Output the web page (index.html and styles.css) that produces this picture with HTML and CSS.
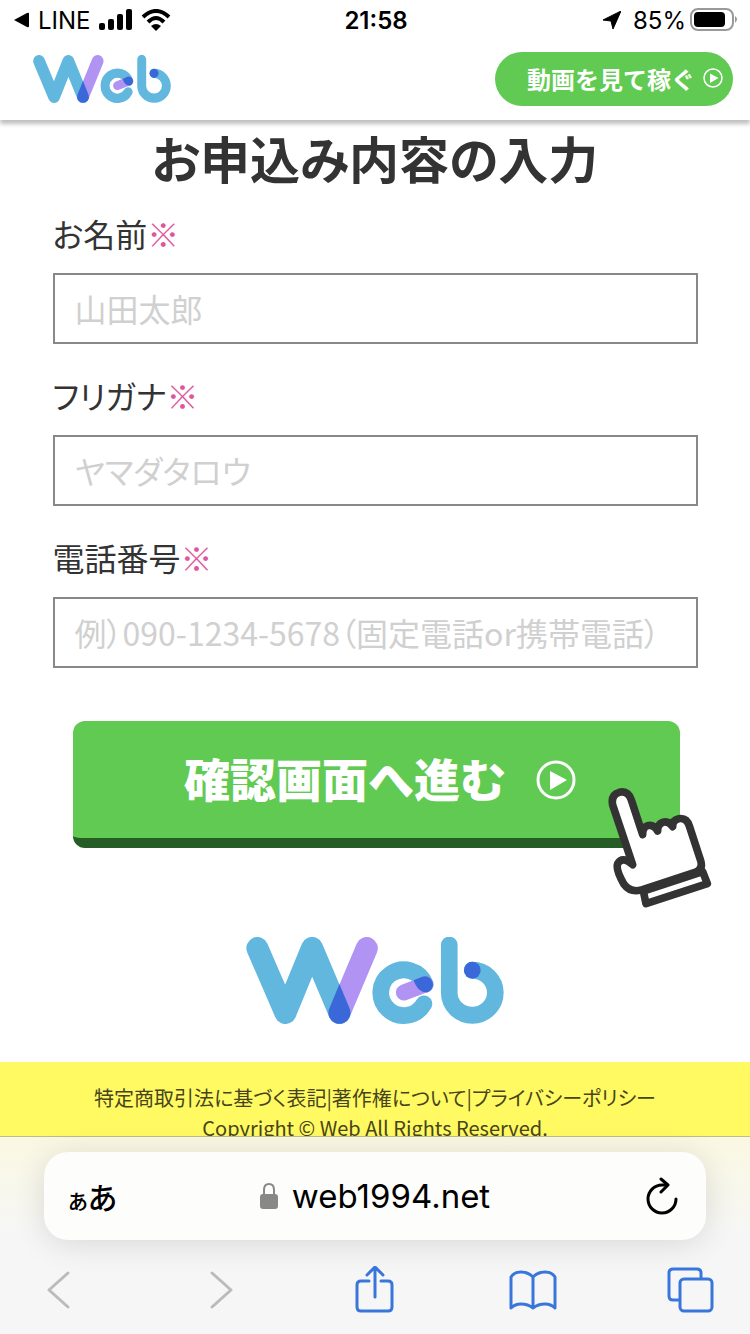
FILE: index.html
```html
<!DOCTYPE html>
<html lang="ja">
<head>
    <meta charset="UTF-8">
    <meta name="viewport" content="width=device-width, initial-scale=1.0">
    <title>お申込み内容の入力</title>
    <link rel="stylesheet" href="styles.css">
</head>
<body>
    <!-- ロゴ共通パーツ -->
    <svg class="sprite" aria-hidden="true">
        <symbol id="logo" viewBox="50 54 773 259" preserveAspectRatio="none">
            <g fill="none" stroke-linecap="round" stroke-linejoin="round">
                <path d="M412 87L330 280" stroke="#b193f3" stroke-width="66"/>
                <path d="M84 87L168 280L248 87L330 280" stroke="#61b7de" stroke-width="66"/>
                <path d="M587 195A69 68 0 1 0 583 253" stroke="#61b7de" stroke-width="50"/>
                <path d="M523 219L587 195" stroke="#b193f3" stroke-width="48"/>
                <path d="M659 78V221A69 67 0 1 0 728 153" stroke="#61b7de" stroke-width="50"/>
            </g>
            <path d="M330 194L361 268A33 33 0 1 1 299 268Z" fill="#3b68d9"/>
            <path d="M552 183L578 172A24 24 0 1 1 594 218C572 221 560 204 552 183Z" fill="#3b68d9"/>
            <circle cx="728" cy="153" r="25" fill="#3b68d9"/>
        </symbol>
        <symbol id="play" viewBox="0 0 40 40">
            <circle cx="20" cy="20" r="18" fill="none" stroke="#fff" stroke-width="3"/>
            <path d="M14 11L31 20L14 30Z" fill="#fff"/>
        </symbol>
    </svg>

    <div class="status-bar">
        <div class="status-left">
            <svg width="16" height="16" viewBox="0 0 16 16"><path d="M0 8L13 1Q15 0 15 2V14Q15 16 13 15Z"/></svg>
            <span>LINE</span>
            <svg width="34" height="22" viewBox="0 0 34 22"><rect x="0" y="14" width="6" height="7" rx="2"/><rect x="9" y="10" width="6" height="11" rx="2"/><rect x="18" y="5" width="6" height="16" rx="2"/><rect x="27" y="0" width="6" height="21" rx="2"/></svg>
            <svg width="30" height="22" viewBox="0 0 30 22"><g fill="none" stroke="#000" stroke-width="4"><path d="M2 8Q15 -4 28 8"/><path d="M7 13Q15 5 23 13"/></g><path d="M10 17Q15 13 20 17L15 22Z"/></svg>
        </div>
        <div class="status-time">21:58</div>
        <div class="status-right">
            <svg width="18" height="18" viewBox="0 0 18 18"><path d="M18 0L10 18L8 10L0 9Z" stroke="#000" stroke-linejoin="round"/></svg>
            <span>85%</span>
            <svg width="48" height="24" viewBox="0 0 48 24"><rect x="1" y="1" width="42" height="21" rx="7" fill="none" stroke="#999" stroke-width="2"/><rect x="4" y="4" width="31" height="15" rx="4"/><path d="M45 8Q49 11 45 15Z" fill="#999"/></svg>
        </div>
    </div>

    <header class="header">
        <a href="#" aria-label="Web"><svg class="header-logo"><use href="#logo"/></svg></a>
        <a href="#" class="header-button">動画を見て稼ぐ<svg width="20" height="20"><use href="#play"/></svg></a>
    </header>

    <main class="page">
        <h1>お申込み内容の入力</h1>
        <form class="form">
            <label for="name">お名前<span class="required">※</span></label>
            <input type="text" id="name" placeholder="山田太郎">
            <label for="kana">フリガナ<span class="required">※</span></label>
            <input type="text" id="kana" placeholder="ヤマダタロウ">
            <label for="tel">電話番号<span class="required">※</span></label>
            <input type="tel" id="tel" placeholder="例）090-1234-5678（固定電話or携帯電話）">
            <div class="submit-area">
                <button type="submit" class="submit-button"><span>確認画面へ進む</span><svg width="40" height="40"><use href="#play"/></svg></button>
                <!-- 指アイコン -->
                <svg class="hand" width="104" height="120" viewBox="85 55 310 360">
                    <g fill="#fff" stroke="#333" stroke-width="23" stroke-linejoin="round" stroke-linecap="round">
                        <path d="M158 285L98 106Q92 75 118 68Q144 62 154 91L188 195Q187 173 203 168Q221 163 233 184Q232 164 248 158Q266 153 278 171Q277 151 296 147Q320 143 328 169L362 273Q370 299 347 307L181 362Q149 368 132 344Q106 299 113 282Q127 258 158 285Z"/>
                        <path d="M190 364L368 306L382 342L198 402Z"/>
                    </g>
                </svg>
            </div>
        </form>
        <div class="page-logo"><svg><use href="#logo"/></svg></div>
        <footer class="footer">
            <nav><a href="#">特定商取引法に基づく表記</a>|<a href="#">著作権について</a>|<a href="#">プライバシーポリシー</a></nav>
            <p>Copyright © Web All Rights Reserved.</p>
        </footer>
    </main>

    <div class="browser-bar">
        <div class="url-bar">
            <button type="button" class="text-size" aria-label="表示設定"><small>ぁ</small>あ</button>
            <div class="url">
                <svg width="18" height="26" viewBox="0 0 18 26"><rect x="0" y="11" width="18" height="15" rx="3" fill="#888"/><path d="M4 12V7Q4 1 9 1Q14 1 14 7V12" fill="none" stroke="#888" stroke-width="2"/></svg>
                <span>web1994.net</span>
            </div>
            <button type="button" class="reload" aria-label="再読み込み"><svg width="32" height="38" viewBox="0 0 32 38"><g fill="none" stroke="#000" stroke-width="3" stroke-linecap="round" stroke-linejoin="round"><path d="M21 8H16A14 14 0 1 0 30 22"/><path d="M15 2L22 8L15 15"/></g></svg></button>
        </div>
        <div class="toolbar">
            <button type="button" class="disabled" aria-label="戻る"><svg viewBox="0 0 48 48"><path d="M32 7L13 24L32 41"/></svg></button>
            <button type="button" class="disabled" aria-label="進む"><svg viewBox="0 0 48 48"><path d="M18 7L37 24L18 41"/></svg></button>
            <button type="button" aria-label="共有"><svg viewBox="0 0 48 48"><path d="M18 15H10Q6 15 6 19V41Q6 45 10 45H37Q41 45 41 41V19Q41 15 37 15H30M24 31V1M16 9L24 1L32 9"/></svg></button>
            <button type="button" aria-label="ブックマーク"><svg viewBox="0 0 48 48"><path d="M24 11Q19 6 12 6Q5 6 2 11V42Q6 38 12 38Q19 38 24 42Q29 38 36 38Q42 38 46 42V11Q43 6 36 6Q29 6 24 11V42"/></svg></button>
            <button type="button" aria-label="タブ"><svg viewBox="0 0 48 48"><rect x="14" y="13" width="32" height="32" rx="4"/><path d="M13 34H7Q3 34 3 30V7Q3 3 7 3H31Q35 3 35 7V12"/></svg></button>
        </div>
    </div>
</body>
</html>
```
FILE: styles.css
```css
* {
    box-sizing: border-box;
}

body {
    display: flex;
    flex-direction: column;
    height: 100vh;
    margin: 0;
    background: #fff;
    color: #333;
    font-family: "Noto Sans CJK JP", sans-serif;
}

a {
    color: inherit;
    text-decoration: none;
}

button {
    padding: 0;
    border: none;
    background: none;
    font-family: inherit;
    cursor: pointer;
}

svg {
    display: block;
    flex-shrink: 0;
}

.sprite {
    position: absolute;
    width: 0;
    height: 0;
}

/* ステータスバー */
.status-bar {
    display: grid;
    grid-template-columns: 1fr auto 1fr;
    align-items: center;
    height: 40px;
    padding: 0 12px 0 14px;
    color: #000;
    font-family: Inter, sans-serif;
    font-size: 24px;
}

.status-left,
.status-right {
    display: flex;
    align-items: center;
    gap: 8px;
}

.status-right {
    justify-content: flex-end;
}

.status-right span {
    margin: 0 -4px 0 4px;
}

.status-time {
    font-weight: 600;
}

/* ヘッダー */
.header {
    display: flex;
    flex-shrink: 0;
    justify-content: space-between;
    align-items: center;
    height: 80px;
    padding: 0 17px 2px 33px;
    background: #fff;
    box-shadow: 0 4px 4px rgba(0, 0, 0, 0.25);
    z-index: 1;
}

.header-logo {
    width: 138px;
    height: 48px;
}

.header-button {
    display: flex;
    align-items: center;
    gap: 8px;
    height: 54px;
    padding: 0 10px 2px 32px;
    border-radius: 27px;
    background: #61ca52;
    color: #fff;
    font-size: 24px;
    font-weight: bold;
}

/* 本文 */
.page {
    flex: 1;
    min-height: 0;
    overflow: hidden;
}

h1 {
    margin: 0;
    padding-top: 7px;
    font-size: 50px;
    line-height: 60px;
    text-align: center;
    font-feature-settings: "palt";
}

.form {
    padding: 22px 7% 0;
}

.form label {
    display: block;
    margin-bottom: 16px;
    font-size: 32px;
    line-height: 48px;
    font-feature-settings: "palt";
}

.required {
    color: #e0559b;
}

.form input {
    display: block;
    width: 100%;
    height: 71px;
    margin-bottom: 27px;
    padding: 0 20px 2px;
    border: 2px solid #888;
    border-radius: 0;
    background: #fff;
    color: #333;
    font-family: inherit;
    font-size: 32px;
    font-feature-settings: "palt";
}

.form input::placeholder {
    color: #d0d0d0;
    opacity: 1;
}

.submit-area {
    position: relative;
    margin: 53px 18px 0 20px;
}

.submit-button {
    display: flex;
    justify-content: center;
    align-items: center;
    gap: 30px;
    width: 100%;
    height: 127px;
    padding-left: 8px;
    border-bottom: 10px solid #265c25;
    border-radius: 12px;
    background: #61ca52;
    color: #fff;
    font-size: 46px;
    font-weight: 900;
}

.submit-button span {
    padding-bottom: 6px;
}

.hand {
    position: absolute;
    right: -32px;
    bottom: -60px;
}

.page-logo {
    display: flex;
    justify-content: center;
    padding: 89px 0 38px;
}

.page-logo svg {
    width: 258px;
    height: 87px;
}

.footer {
    padding: 21px 0;
    background: #fffa62;
    color: #48441b;
    font-size: 20px;
    line-height: 30px;
    text-align: center;
    font-feature-settings: "palt";
}

.footer p {
    margin: 0;
}

/* ブラウザの下部バー */
.browser-bar {
    flex-shrink: 0;
    padding-bottom: 16px;
    border-top: 1px solid #bdbb91;
    background: linear-gradient(#faf8e2, #f6f6f6 50%);
}

.url-bar {
    display: grid;
    grid-template-columns: 1fr auto 1fr;
    align-items: center;
    height: 88px;
    margin: 15px 44px 22px;
    padding: 0 24px;
    border-radius: 24px;
    background: #fdfdfb;
    box-shadow: 0 4px 32px rgba(0, 0, 0, 0.12);
    color: #000;
}

.text-size {
    justify-self: start;
    color: #000;
    font-size: 30px;
    font-weight: 500;
    font-feature-settings: "palt";
}

.text-size small {
    font-size: 24px;
}

.url {
    display: flex;
    align-items: center;
    gap: 14px;
    font-family: Inter, sans-serif;
    font-size: 33px;
}

.reload {
    justify-self: end;
    margin-right: 4px;
}

.toolbar {
    display: flex;
    justify-content: space-between;
    padding: 4px 36px;
}

.toolbar svg {
    width: 48px;
    height: 48px;
    fill: none;
    stroke: #3876dc;
    stroke-width: 3;
    stroke-linecap: round;
    stroke-linejoin: round;
}

.toolbar .disabled svg {
    stroke: #bbb;
}
```
